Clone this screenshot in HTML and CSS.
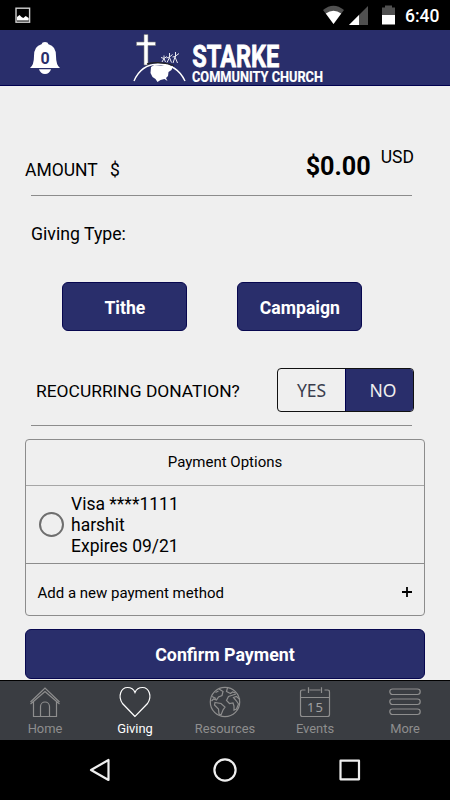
FILE: index.html
```html
<!DOCTYPE html>
<html lang="en">
<head>
  <meta charset="UTF-8">
  <title>Giving - Starke Community Church</title>
  <link rel="stylesheet" href="styles.css">
</head>
<body>

  <div class="statusbar">
    <svg class="status-photo" width="16" height="17" viewBox="0 0 16 17">
      <rect x="1" y="1.2" width="13.6" height="14" fill="none" stroke="#d0d0d0" stroke-width="1.4"/>
      <path d="M2 13.6V10l2.500-2 2 2 1.800 1 2.400-2 3 2v2.600z" fill="#fff"/>
    </svg>
    <svg class="status-icons" width="76" height="22" viewBox="0 0 76 22">
      <path d="M1 6Q11.500-2.500 22 6L11.500 20z" fill="#505050"/>
      <path d="M3.800 9.600Q11.500 4 19.200 9.600L11.500 20z" fill="#fff"/>
      <path d="M46 2V21H27z" fill="#505050"/>
      <path d="M37 11V21H27z" fill="#fff"/>
      <path d="M60 3.500h3V1.500h7v2h3V11H60z" fill="#505050"/>
      <path d="M60 11h13v9.500H60z" fill="#fff"/>
    </svg>
    <span class="clock">6:40</span>
  </div>

  <div class="header">
    <div class="bell">
      <svg width="32" height="34" viewBox="0 0 32 34">
        <path d="M1 27Q5 24 5 15Q5 5 12.500 3.200Q13 1 16 1Q19 1 19.500 3.200Q27 5 27 15Q27 24 31 27z" fill="#fff"/>
        <path d="M10 28.200h12Q20.500 33 16 33Q11.500 33 10 28.200z" fill="#fff"/>
      </svg>
      <span class="bell-count">0</span>
    </div>
    <svg class="logo" width="200" height="55" viewBox="0 0 200 55">
      <path d="M13 4.500h4V12h7.500v3.500H17V35h-4V15.500H5.500V12h7.500z" fill="#fff" stroke="#777" stroke-width=".6"/>
      <path d="M3 51Q10 34.500 27 34Q46 34 54 51" fill="none" stroke="#fff" stroke-width="1.400"/>
      <path d="M16 34Q29 30.500 43 35.500" fill="none" stroke="#222" stroke-width="1.300"/>
      <path d="M20 37l3-2 7 .5 7-1 3 2 2-.5-1.500 4-3 2-.5 4-2 2 1.500 3-3-2-4 1-3 2-2-3-3-2-2-4z" fill="#fff"/>
      <g fill="none" stroke="#e8e8ef" stroke-width="1">
        <path d="M31 32l2-3.500 1.500 3.500M30 27.500l3 1 3-2M33 28.500V25.500"/>
        <path d="M36 32.500l2.500-5 2 5M35.500 28l3-1 3-2.500M38.500 27.500v-4.500"/>
        <path d="M42 33l2-6 2.500 6M41.500 27l2.500-.5 4-3M44.500 27v-5"/>
      </g>
      <text class="logo-name" x="61.300" y="36.700" textLength="87" lengthAdjust="spacingAndGlyphs">STARKE</text>
      <text class="logo-sub" x="61" y="51.800" textLength="131" lengthAdjust="spacingAndGlyphs">COMMUNITY CHURCH</text>
    </svg>
  </div>

  <div class="content">
    <div class="amount-row">
      <span class="amount-label">AMOUNT</span>
      <span class="amount-symbol">$</span>
      <span class="amount-value">$0.00</span>
      <span class="amount-currency">USD</span>
    </div>

    <div class="giving-label">Giving Type:</div>

    <div class="giving-buttons">
      <button class="btn">Tithe</button>
      <button class="btn">Campaign</button>
    </div>

    <div class="recurring-row">
      <span class="recurring-label">REOCURRING DONATION?</span>
      <div class="toggle">
        <span class="toggle-yes">YES</span>
        <span class="toggle-no">NO</span>
      </div>
    </div>

    <div class="payment">
      <div class="payment-title">Payment Options</div>
      <div class="payment-card">
        <span class="radio"></span>
        <div class="card-info">Visa ****1111<br>harshit<br>Expires 09/21</div>
      </div>
      <div class="payment-add">
        <span>Add a new payment method</span>
        <svg class="plus" width="12" height="12" viewBox="0 0 12 12"><path d="M6 1v10M1 6h10"/></svg>
      </div>
    </div>

    <button class="btn btn-confirm">Confirm Payment</button>
  </div>

  <div class="tabbar">
    <div class="tab">
      <svg width="34" height="32" viewBox="0 0 34 32">
        <path d="M2.500 16L17 2l14.500 14M5.500 15.800V30.500H12.500V20.500a4.500 4.500 0 0 1 9 0V30.500H28.500V15.800M2.500 18L17 5.500 31.500 18M12.500 30.500h9"/>
      </svg>
      <span>Home</span>
    </div>
    <div class="tab active">
      <svg width="34" height="32" viewBox="0 0 34 32">
        <path d="M17 30.500L4.500 17.500C-.5 10 3 1.500 9.500 1.500Q15 1.500 17 6.500Q19 1.500 24.500 1.500C31 1.500 34.500 10 29.500 17.500z"/>
      </svg>
      <span>Giving</span>
    </div>
    <div class="tab">
      <svg width="34" height="32" viewBox="0 0 34 32">
        <circle cx="17" cy="16" r="14.700"/>
        <path d="M11 3l4 2.500-1 4-3.500 1.500-2 3-3-1-2 2M4 10.500l4 2M7.500 6.500l3-1.500M7 16.500l6 1 4 3.500-2 3-2 5-2-1-.500-5-4-4z"/>
        <path d="M19.500 2l-1 3.500 4 2 2-1.500 3 1M28 8l-4.500 1.500-3 1-2 4 3 3 3.500-.500 1 3 0 4 2.500-1 2-5-2-3-3-3.500 3-1 3.500 3"/>
      </svg>
      <span>Resources</span>
    </div>
    <div class="tab">
      <svg width="34" height="32" viewBox="0 0 34 32">
        <path d="M7.500 4H4.500Q2.500 4 2.500 6V28.500Q2.500 30.500 4.500 30.500H29.500Q31.500 30.500 31.500 28.500V6Q31.500 4 29.500 4H26.500M11.500 4h11M10.500 1.200V7M23.500 1.200V7M2.500 11.500h29"/>
        <text class="cal-day" x="17.500" y="26" text-anchor="middle">15</text>
      </svg>
      <span>Events</span>
    </div>
    <div class="tab">
      <svg width="34" height="32" viewBox="0 0 34 32">
        <rect x="1.800" y="3" width="30.400" height="5.500" rx="2.700"/>
        <rect x="1.800" y="13" width="30.400" height="5.500" rx="2.700"/>
        <rect x="1.800" y="23" width="30.400" height="5.500" rx="2.700"/>
      </svg>
      <span>More</span>
    </div>
  </div>

  <div class="navbar">
    <svg width="26" height="26" viewBox="0 0 26 26"><path d="M4 13L21.500 3V23z"/></svg>
    <svg width="26" height="26" viewBox="0 0 26 26"><circle cx="13" cy="13" r="10.600"/></svg>
    <svg width="26" height="26" viewBox="0 0 26 26"><rect x="3.500" y="3.700" width="18.500" height="18.600"/></svg>
  </div>

</body>
</html>
```
FILE: styles.css
```css
* {
  box-sizing: border-box;
}
body {
  margin: 0;
  width: 450px;
  height: 800px;
  overflow: hidden;
  display: flex;
  flex-direction: column;
  font-family: Roboto, sans-serif;
  background-color: #efefef;
  color: #000;
}
/* Android status bar */
.statusbar {
  height: 30px;
  background: #000;
  color: #fff;
  display: flex;
  align-items: center;
  padding: 0 10px 0 15px;
}
.status-icons {
  margin-left: auto;
  margin-right: 7px;
}
.clock {
  width: 35px;
  padding-top: 1px;
  font-size: 17.5px;
  font-weight: 500;
  white-space: nowrap;
}
/* Church header */
.header {
  height: 56px;
  background-color: #292e6b;
  border-bottom: 1px solid #00004f;
  display: flex;
  padding-left: 29px;
}
.bell {
  position: relative;
  width: 32px;
  height: 34px;
  margin-top: 11px;
}
.bell-count {
  position: absolute;
  top: 8px;
  left: 0;
  width: 32px;
  text-align: center;
  color: #292e6b;
  font-size: 16px;
  line-height: 20px;
  font-weight: 700;
}
.logo {
  margin-left: 70px;
  overflow: visible;
}
.logo-name {
  font-size: 31px;
  font-weight: 700;
  fill: #fff;
  stroke: #fff;
  stroke-width: 0.8px;
}
.logo-sub {
  font-size: 15px;
  font-weight: 700;
  fill: #fff;
  stroke: #fff;
  stroke-width: 0.2px;
}
.content {
  height: 594px;
  padding: 0 25px;
}
.amount-row {
  display: flex;
  height: 110px;
  padding: 60px 11px 0 0;
  font-size: 17.5px;
  line-height: 22px;
  background: linear-gradient(#8c8c8c, #8c8c8c) 6px 109px / 381px 1px no-repeat;
}
.amount-label {
  width: 85px;
  padding-top: 13px;
}
.amount-symbol {
  padding-top: 13px;
}
.amount-value {
  margin-left: auto;
  padding-top: 10px;
  font-size: 25.2px;
  font-weight: 700;
}
.amount-currency {
  margin-left: 10px;
}
.giving-label {
  padding: 27px 0 0 6px;
  font-size: 17.7px;
  line-height: 22px;
}
.giving-buttons {
  display: flex;
  gap: 50px;
  padding: 37px 0 0 37.4px;
}
.btn {
  width: 125px;
  height: 49px;
  padding: 2px 0 0;
  border: 1px solid #07074f;
  border-radius: 6px;
  background-color: #292e6b;
  color: #fff;
  font-family: inherit;
  font-size: 17.6px;
  font-weight: 700;
}
.recurring-row {
  display: flex;
  align-items: flex-start;
  justify-content: space-between;
  height: 95px;
  padding: 37px 11px 0 11px;
  background: linear-gradient(#8c8c8c, #8c8c8c) 6px 94px / 381px 1px no-repeat;
}
.recurring-label {
  padding-top: 12px;
  font-size: 17.4px;
  line-height: 22px;
  white-space: nowrap;
}
.toggle {
  display: flex;
  width: 137px;
  height: 44px;
  border: 1px solid #111;
  border-radius: 4px;
  overflow: hidden;
  font-family: "Noto Sans", sans-serif;
  font-size: 17.5px;
  line-height: 42px;
  text-align: center;
}
.toggle-yes {
  width: 67px;
  color: #3a3d4d;
}
.toggle-no {
  flex: 1;
  padding-left: 7px;
  border-left: 1px solid #00004f;
  background: #292e6b;
  color: #efefef;
}
/* Payment box */
.payment {
  margin-top: 13px;
  height: 177px;
  border: 1px solid #8c8c8c;
  border-radius: 4px;
}
.payment-title {
  height: 46px;
  border-bottom: 1px solid #a6a6a6;
  font-size: 15px;
  line-height: 45px;
  text-align: center;
}
.payment-card {
  height: 78px;
  display: flex;
  align-items: center;
  padding-left: 13px;
  border-bottom: 1px solid #8c8c8c;
}
.radio {
  width: 25px;
  height: 25px;
  border: 2px solid #6e6e6e;
  border-radius: 50%;
}
.card-info {
  margin-left: 7px;
  padding-top: 2px;
  font-size: 17.5px;
  line-height: 20.7px;
}
.payment-add {
  display: flex;
  justify-content: space-between;
  padding: 18px 11.5px 0 11.5px;
  font-size: 15px;
  line-height: 22px;
}
.plus {
  margin-top: 4px;
  fill: none;
  stroke: #000;
  stroke-width: 1.8;
}
.btn-confirm {
  display: block;
  width: 400px;
  height: 50px;
  margin-top: 13px;
  font-size: 17.8px;
  padding-top: 1px;
}
/* Bottom tabs */
.tabbar {
  height: 60px;
  display: flex;
  background-color: #3a3d42;
  border-top: 1px solid #000;
}
.tab {
  width: 90px;
  display: flex;
  flex-direction: column;
  align-items: center;
  padding-top: 5px;
  color: #8e8e8e;
  font-size: 12.9px;
  line-height: 22px;
}
.tab svg {
  fill: none;
  stroke: currentColor;
  stroke-width: 1.2;
}
.tab.active {
  color: #fff;
}
.cal-day {
  font-family: "Noto Sans", sans-serif;
  font-size: 13px;
  letter-spacing: 1px;
  fill: #a0a0a0;
  stroke: none;
}
/* Android navigation */
.navbar {
  height: 60px;
  display: flex;
  align-items: center;
  justify-content: center;
  gap: 99px;
  background: #000;
}
.navbar svg {
  fill: none;
  stroke: #efefef;
  stroke-width: 2.2;
  stroke-linejoin: round;
}
```
